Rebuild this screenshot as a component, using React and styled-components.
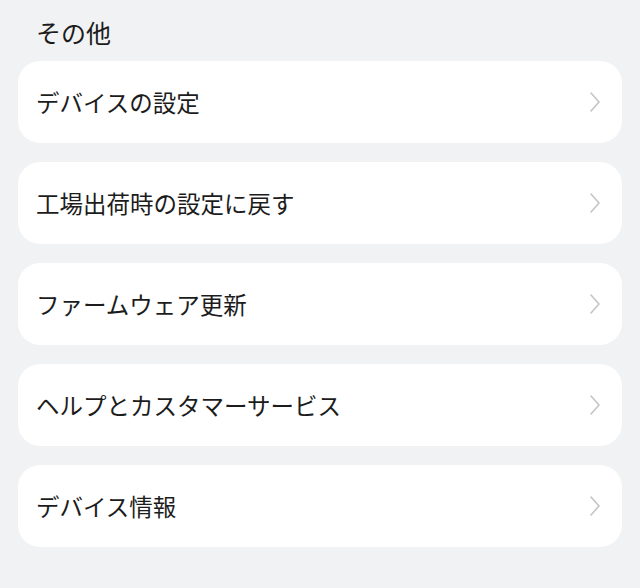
import React from "react";
import styled, { createGlobalStyle } from "styled-components";

const GlobalStyle = createGlobalStyle`
  html, body {
    margin: 0;
    padding: 0;
    background: #f1f2f4;
  }
  body {
    font-family: "Noto Sans CJK JP", "Noto Sans", sans-serif;
    color: #1a1a1a;
  }
`;

const Page = styled.main`
  width: 640px;
  height: 588px;
  box-sizing: border-box;
  padding: 14px 18px 0 18px;
  background: #f1f2f4;
`;

const SectionTitle = styled.h2`
  margin: 0 0 0 18px;
  font-size: 25px;
  font-weight: 400;
  line-height: 36px;
  color: #1c1c1c;
`;

const List = styled.div`
  display: flex;
  flex-direction: column;
  gap: 19px;
  margin-top: 11px;
`;

const Row = styled.div`
  display: flex;
  align-items: center;
  justify-content: space-between;
  height: 82px;
  box-sizing: border-box;
  padding: 0 20px 0 18px;
  background: #ffffff;
  border-radius: 22px;
`;

const Label = styled.span`
  font-size: 23.5px;
  font-weight: 400;
  color: #1c1c1c;
`;

const Chevron = () => (
  <svg width="14" height="22" viewBox="0 0 14 22" fill="none">
    <path d="M3 2 L11 11 L3 20" stroke="#c4c4c6" strokeWidth="1.6" strokeLinecap="round" strokeLinejoin="round" />
  </svg>
);

const items = [
  "デバイスの設定",
  "工場出荷時の設定に戻す",
  "ファームウェア更新",
  "ヘルプとカスタマーサービス",
  "デバイス情報",
];

const App = () => {
  return (
    <Page>
      <GlobalStyle />
      <SectionTitle>その他</SectionTitle>
      <List>
        {items.map((item) => (
          <Row key={item}>
            <Label>{item}</Label>
            <Chevron />
          </Row>
        ))}
      </List>
    </Page>
  );
};

export default App;
